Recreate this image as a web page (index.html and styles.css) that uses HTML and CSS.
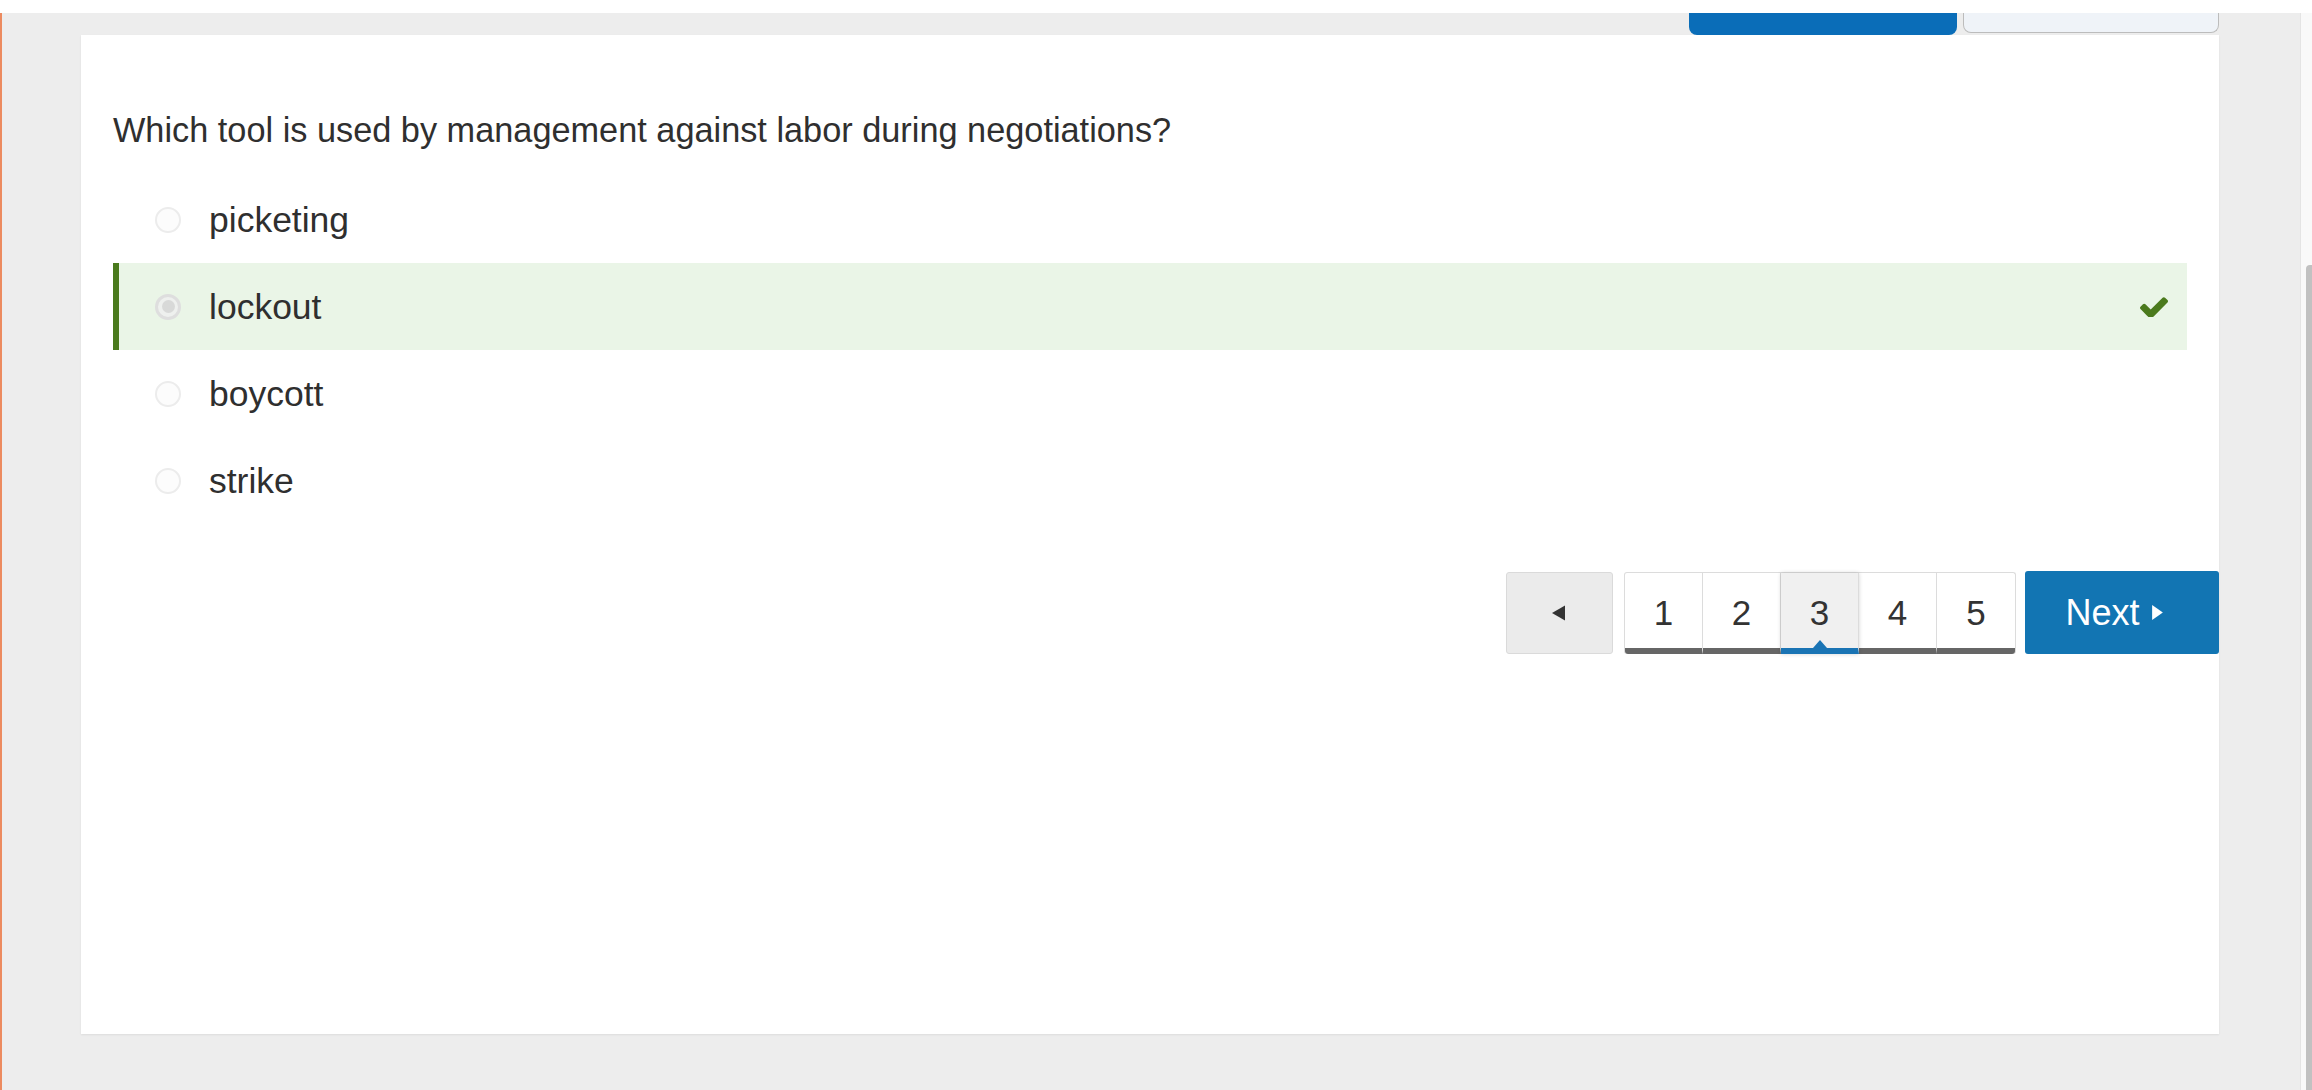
FILE: index.html
```html
<!DOCTYPE html>
<html lang="en">
<head>
<meta charset="utf-8">
<title>Quiz question</title>
<link rel="stylesheet" href="styles.css">
</head>
<body>
<div class="topstrip"></div>
<div class="frame">
  <div class="edge"></div>
  <main class="stage">
    <div class="tabs">
      <div class="tab tab-primary"></div>
      <div class="tab tab-secondary"></div>
    </div>
    <section class="card">
      <p class="question">Which tool is used by management against labor during negotiations?</p>
      <ul class="options">
        <li class="option"><span class="radio"></span><span class="label">picketing</span></li>
        <li class="option option-correct"><span class="radio radio-checked"><span class="radio-dot"></span></span><span class="label">lockout</span>
          <svg class="check" viewBox="121 330 1550 1100" aria-hidden="true"><path d="M1671 566q0 40-28 68l-724 724-136 136q-28 28-68 28t-68-28l-136-136-362-362q-28-28-28-68t28-68l136-136q28-28 68-28t68 28l294 295 656-657q28-28 68-28t68 28l136 136q28 28 28 68z"/></svg>
        </li>
        <li class="option"><span class="radio"></span><span class="label">boycott</span></li>
        <li class="option"><span class="radio"></span><span class="label">strike</span></li>
      </ul>
      <nav class="pager">
        <button class="pager-prev" type="button" aria-label="Previous">
          <svg class="tri" viewBox="0 0 12 14" aria-hidden="true"><path d="M12 0 0 7l12 7z"/></svg>
        </button>
        <div class="pages">
          <span class="page">1</span>
          <span class="page">2</span>
          <span class="page page-active">3</span>
          <span class="page">4</span>
          <span class="page">5</span>
        </div>
        <button class="pager-next" type="button">Next
          <svg class="tri tri-next" viewBox="0 0 10 14" aria-hidden="true"><path d="M0 0l10 7-10 7z"/></svg>
        </button>
      </nav>
    </section>
  </main>
  <div class="scrollbar"><div class="thumb"></div></div>
</div>
</body>
</html>
```
FILE: styles.css
```css
* { box-sizing: border-box; }
html, body { margin: 0; padding: 0; }
body {
  width: 2312px;
  height: 1090px;
  overflow: hidden;
  background: #ededed;
  font-family: "Liberation Sans", Arial, sans-serif;
  color: #333;
}
.topstrip { height: 13px; background: #fff; }
.frame { display: flex; height: 1077px; }
.edge { width: 2px; background: #ec8b60; }
.stage { flex: 1; padding: 0 81px 0 79px; background: #ededed; }
.tabs { display: flex; justify-content: flex-end; align-items: flex-start; height: 22px; gap: 6px; }
.tab-primary { width: 268px; height: 22px; background: #0a6db8; border-radius: 0 0 8px 8px; }
.tab-secondary { width: 256px; height: 20px; background: #eff3f8; border: 1.5px solid #bcbcbc; border-top: none; border-radius: 0 0 8px 8px; }
.card {
  height: 999px;
  background: #fff;
  padding: 71px 0 0 32px;
  box-shadow: 0 1px 2px rgba(0,0,0,0.07);
}
.question { margin: 0 32px 22px 0; font-size: 34.3px; line-height: 48px; color: #2f2f2f; }
.options { list-style: none; margin: 0 32px 0 0; padding: 0; }
.option { display: flex; align-items: center; height: 87px; padding-left: 36px; padding-right: 19px; border-left: 6px solid transparent; }
.option-correct { background: #eaf5e7; border-left-color: #4a7a1c; }
.radio {
  width: 26px; height: 26px; border-radius: 50%;
  border: 2px solid #ececec; background: #fcfcfc;
  display: flex; align-items: center; justify-content: center;
  flex: none;
}
.radio-checked { border: 3px solid #dedede; background: #eef0ee; }
.radio-dot { width: 13px; height: 13px; border-radius: 50%; background: #d8d9d8; }
.label { margin-left: 28px; font-size: 35.5px; line-height: 48px; color: #2f2f2f; }
.check { margin-left: auto; width: 28px; height: 20px; fill: #4b7a1d; }
.pager { display: flex; justify-content: flex-end; align-items: flex-start; margin-top: 47px; }
.pager-prev {
  width: 107px; height: 82px; margin-top: 1px;
  background: #ebebeb; border: 1px solid #dadada; border-radius: 3px;
  display: flex; align-items: center; justify-content: center; padding: 0 3px 0 0;
}
.tri { width: 13px; height: 16px; fill: #333; }
.pages {
  display: flex; margin-left: 11px; margin-top: 1px;
  border: 1px solid #dcdcdc; border-bottom: none; border-radius: 3px;
  background: #fff;
}
.page {
  position: relative;
  width: 78px; height: 81px;
  display: flex; align-items: center; justify-content: center;
  padding-top: 4px;
  font-size: 35px; color: #333;
  border-bottom: 6px solid #666;
  border-right: 1px solid #dcdcdc;
}
.page:first-child { border-bottom-left-radius: 3px; }
.page:last-child { border-right: none; border-bottom-right-radius: 3px; }
.page-active {
  background: #f0f0f0;
  border-bottom-color: #1a74b4;
  box-shadow: 0 0 4px rgba(0,0,0,0.18);
  z-index: 1;
}
.page-active::after {
  content: "";
  position: absolute; left: 50%; bottom: 0; margin-left: -7px;
  border-left: 7px solid transparent; border-right: 7px solid transparent;
  border-bottom: 8px solid #1a74b4;
}
.pager-next {
  width: 194px; height: 83px; margin-left: 9px;
  background: #1275b3; color: #fff; border: none; border-radius: 3px;
  font-family: "Liberation Sans", Arial, sans-serif; font-size: 36px;
  display: flex; align-items: center; justify-content: center; gap: 12px; padding: 0 16px 0 0;
}
.tri-next { width: 11px; height: 15px; fill: #fff; }
.scrollbar { width: 12px; background: #f9f9f9; border-left: 1px solid #e4e4e4; padding-top: 252px; display: flex; justify-content: flex-end; }
.thumb { width: 6px; height: 825px; background: #c1c1c1; border-radius: 4px 0 0 0; }
```
